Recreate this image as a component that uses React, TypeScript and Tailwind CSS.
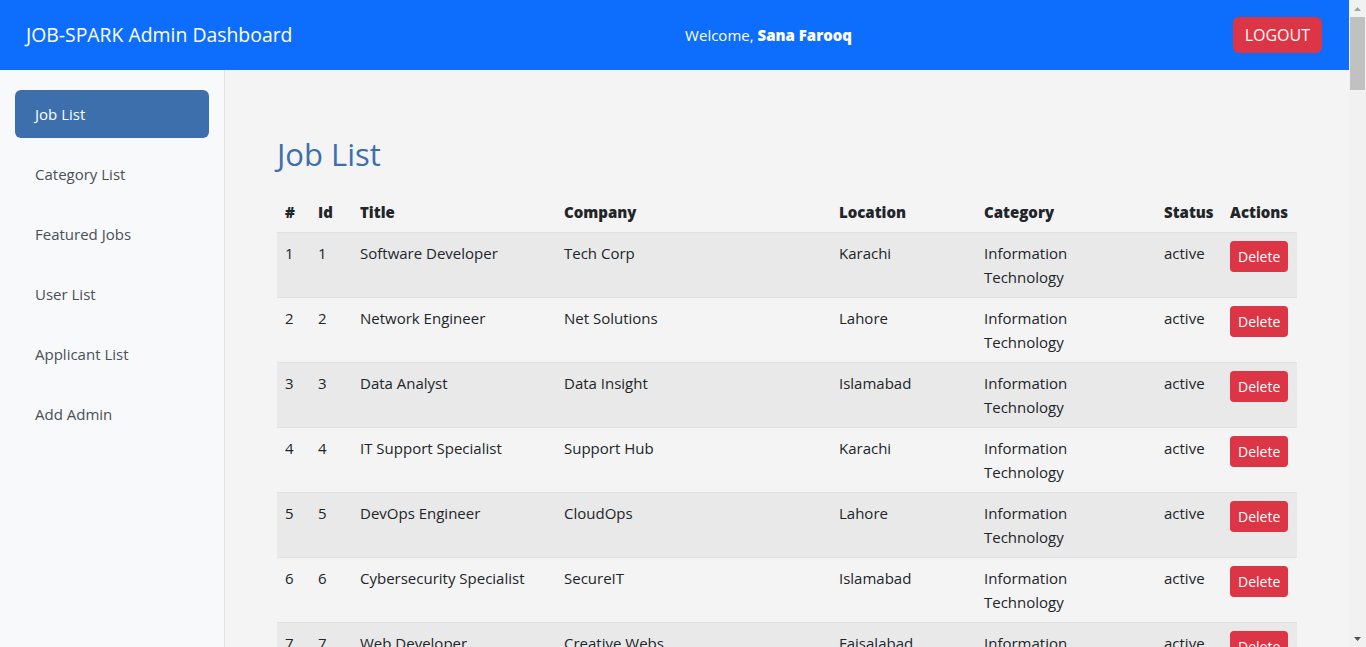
import React from 'react';

interface Job {
  id: number;
  title: string;
  company: string;
  location: string;
  category: string;
  status: string;
}

const jobs: Job[] = [
  { id: 1, title: 'Software Developer', company: 'Tech Corp', location: 'Karachi', category: 'Information Technology', status: 'active' },
  { id: 2, title: 'Network Engineer', company: 'Net Solutions', location: 'Lahore', category: 'Information Technology', status: 'active' },
  { id: 3, title: 'Data Analyst', company: 'Data Insight', location: 'Islamabad', category: 'Information Technology', status: 'active' },
  { id: 4, title: 'IT Support Specialist', company: 'Support Hub', location: 'Karachi', category: 'Information Technology', status: 'active' },
  { id: 5, title: 'DevOps Engineer', company: 'CloudOps', location: 'Lahore', category: 'Information Technology', status: 'active' },
  { id: 6, title: 'Cybersecurity Specialist', company: 'SecureIT', location: 'Islamabad', category: 'Information Technology', status: 'active' },
  { id: 7, title: 'Web Developer', company: 'Creative Webs', location: 'Faisalabad', category: 'Information Technology', status: 'active' },
  { id: 8, title: 'Database Administrator', company: 'DataCore', location: 'Karachi', category: 'Information Technology', status: 'active' },
  { id: 9, title: 'Mobile App Developer', company: 'AppWorks', location: 'Lahore', category: 'Information Technology', status: 'active' },
  { id: 10, title: 'Cloud Architect', company: 'SkyNet Systems', location: 'Islamabad', category: 'Information Technology', status: 'active' },
];

const menu = ['Job List', 'Category List', 'Featured Jobs', 'User List', 'Applicant List', 'Add Admin'];

const font = { fontFamily: '"Open Sans", "Noto Sans", sans-serif' };

// fake browser scrollbar, as seen in the screenshot
const Scrollbar: React.FC = () => (
  <div className="sticky top-0 h-screen w-[17px] shrink-0 self-start bg-[#f1f1f1] flex flex-col items-center">
    <div className="h-[17px] w-full flex items-center justify-center">
      <svg width="7" height="4" viewBox="0 0 7 4"><path d="M0 4L3.5 0L7 4Z" fill="#a3a3a3" /></svg>
    </div>
    <div className="w-[15px] h-[73px] bg-[#c1c1c1]" />
    <div className="flex-1" />
    <div className="h-[17px] w-full flex items-center justify-center">
      <svg width="7" height="4" viewBox="0 0 7 4"><path d="M0 0L7 0L3.5 4Z" fill="#505050" /></svg>
    </div>
  </div>
);

export default function App() {
  return (
    <div className="min-h-screen flex bg-[#f4f4f4] text-[#212529]" style={font}>
      <div className="flex-1 min-w-0 flex flex-col">
        <header className="h-[70px] bg-[#0d6efd] flex items-center justify-between pl-[26px] pr-[27px] text-white shrink-0">
          <span className="text-[19.4px]">JOB-SPARK Admin Dashboard</span>
          <span className="text-[15px] ml-[12px]">
            Welcome, <b className="font-extrabold">Sana Farooq</b>
          </span>
          <button className="h-9 px-3 rounded-md bg-[#dc3545] text-white text-[16px]">LOGOUT</button>
        </header>

        <div className="flex flex-1">
          <aside className="w-[225px] shrink-0 bg-[#f8f9fa] border-r border-[#dee2e6] px-[15px] pt-5">
            <ul className="flex flex-col gap-3">
              {menu.map((m, i) => (
                <li
                  key={m}
                  className={
                    'h-12 flex items-center pl-5 rounded-md text-[15px] ' +
                    (i === 0 ? 'bg-[#3d6fad] text-white' : 'text-[#495057]')
                  }
                >
                  {m}
                </li>
              ))}
            </ul>
          </aside>

          <main className="flex-1 min-w-0 px-[52px] pt-[64px]">
            <h1 className="text-[31px] text-[#3d6fad] leading-[40px] mb-[19px]">Job List</h1>
            <table className="w-full table-fixed border-collapse text-[15px]">
              <colgroup>
                <col className="w-[33px]" />
                <col className="w-[42px]" />
                <col className="w-[204px]" />
                <col className="w-[275px]" />
                <col className="w-[145px]" />
                <col className="w-[180px]" />
                <col className="w-[66px]" />
                <col className="w-[75px]" />
              </colgroup>
              <thead>
                <tr className="border-b border-[#dee2e6] text-left">
                  {['#', 'Id', 'Title', 'Company', 'Location', 'Category', 'Status', 'Actions'].map((h) => (
                    <th key={h} className="px-2 pt-[7px] pb-2 font-extrabold leading-6 whitespace-nowrap">
                      {h}
                    </th>
                  ))}
                </tr>
              </thead>
              <tbody>
                {jobs.map((j, i) => (
                  <tr key={j.id} className={'border-b border-[#dee2e6] ' + (i % 2 === 0 ? 'bg-[#e9e9e9]' : 'bg-[#f4f4f4]')}>
                    <td className="p-2 align-top leading-6">{i + 1}</td>
                    <td className="p-2 align-top leading-6">{j.id}</td>
                    <td className="p-2 align-top leading-6">{j.title}</td>
                    <td className="p-2 align-top leading-6">{j.company}</td>
                    <td className="p-2 align-top leading-6">{j.location}</td>
                    <td className="p-2 align-top leading-6">{j.category}</td>
                    <td className="p-2 align-top leading-6">{j.status}</td>
                    <td className="p-2 align-top leading-6">
                      <button className="bg-[#dc3545] text-white text-[14px] px-2 h-[31px] rounded">Delete</button>
                    </td>
                  </tr>
                ))}
              </tbody>
            </table>
            <div className="h-12" />
          </main>
        </div>
      </div>
      <Scrollbar />
    </div>
  );
}
